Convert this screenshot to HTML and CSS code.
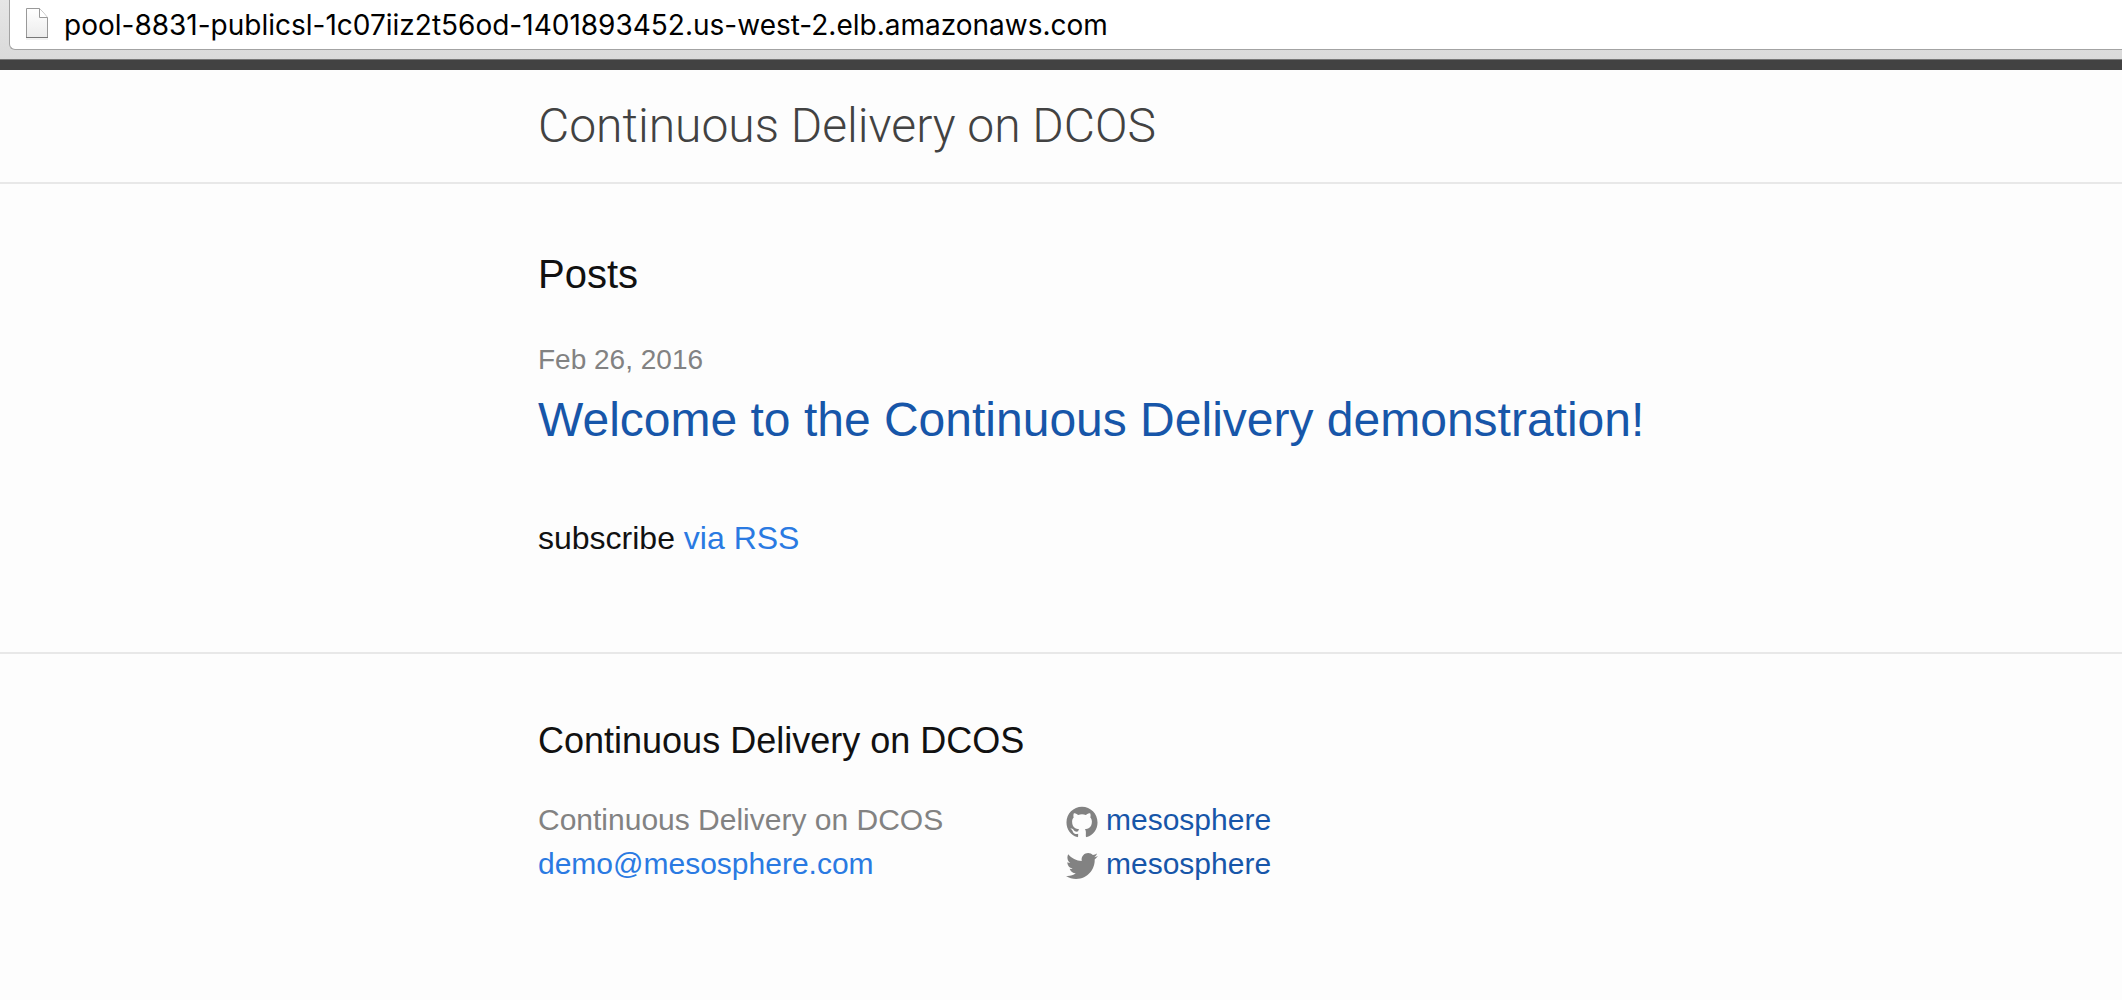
FILE: index.html
```html
<!DOCTYPE html>
<html lang="en">
<head>
<meta charset="utf-8">
<meta name="viewport" content="width=device-width, initial-scale=1">
<title>Continuous Delivery on DCOS</title>
<link rel="stylesheet" href="styles.css">
</head>
<body>
<div class="toolbar">
  <label class="address">
    <svg class="address-icon" viewBox="0 0 24 36" aria-hidden="true">
      <defs><linearGradient id="sheet" x1="0" y1="0" x2="0" y2="1"><stop offset="0" stop-color="#fff"/><stop offset="1" stop-color="#ececec"/></linearGradient></defs>
      <path d="M1.5 1.5H14.5L22.5 10.5V30.500H1.500Z" fill="url(#sheet)" stroke="#999"/>
      <path d="M14.500 1.500V10.500H22.500" fill="#fff" stroke="#999"/>
      <path d="M1 30.500H23" stroke="#777"/>
      <path d="M1 32H23" stroke="#e4e4e4"/>
    </svg>
    <input class="address-input" type="text" aria-label="Address" value="pool-8831-publicsl-1c07iiz2t56od-1401893452.us-west-2.elb.amazonaws.com">
  </label>
</div>
<header class="site-header">
  <div class="wrapper"><a class="site-title" href="#">Continuous Delivery on DCOS</a></div>
</header>
<main class="page-content">
  <div class="wrapper">
    <h1 class="page-heading">Posts</h1>
    <ul class="post-list">
      <li>
        <span class="post-meta">Feb 26, 2016</span>
        <h2 class="post-heading"><a class="post-link" href="#">Welcome to the Continuous Delivery demonstration!</a></h2>
      </li>
    </ul>
    <p class="rss">subscribe <a class="link" href="#">via RSS</a></p>
  </div>
</main>
<footer class="site-footer">
  <div class="wrapper">
    <h2 class="footer-heading">Continuous Delivery on DCOS</h2>
    <div class="footer-columns">
      <ul class="contact-list">
        <li>Continuous Delivery on DCOS</li>
        <li><a class="link" href="#">demo@mesosphere.com</a></li>
      </ul>
      <ul class="contact-list">
        <li><a class="social" href="#"><svg class="social-icon" viewBox="0 0 16 16" aria-hidden="true"><path d="M7.999,0.431c-4.285,0-7.76,3.474-7.76,7.761c0,3.428,2.223,6.337,5.307,7.363c0.388,0.071,0.53-0.168,0.53-0.374c0-0.184-0.007-0.672-0.01-1.32c-2.159,0.469-2.614-1.04-2.614-1.04c-0.353-0.896-0.862-1.135-0.862-1.135c-0.705-0.481,0.053-0.472,0.053-0.472c0.779,0.055,1.189,0.8,1.189,0.8c0.692,1.186,1.816,0.843,2.258,0.645c0.071-0.502,0.271-0.843,0.493-1.037C4.86,11.425,3.049,10.76,3.049,7.786c0-0.847,0.302-1.54,0.799-2.082C3.768,5.507,3.501,4.718,3.924,3.65c0,0,0.652-0.209,2.134,0.796C6.677,4.273,7.34,4.187,8,4.184c0.659,0.003,1.323,0.089,1.943,0.261c1.482-1.004,2.132-0.796,2.132-0.796c0.423,1.068,0.157,1.857,0.077,2.054c0.497,0.542,0.798,1.235,0.798,2.082c0,2.981-1.814,3.637-3.543,3.829c0.279,0.24,0.527,0.713,0.527,1.437c0,1.037-0.01,1.874-0.01,2.129c0,0.208,0.14,0.449,0.534,0.373c3.081-1.028,5.302-3.935,5.302-7.362C15.76,3.906,12.285,0.431,7.999,0.431z"/></svg>mesosphere</a></li>
        <li><a class="social" href="#"><svg class="social-icon" viewBox="0 0 16 16" aria-hidden="true"><path d="M15.969,3.058c-0.586,0.26-1.217,0.436-1.878,0.515c0.675-0.405,1.194-1.045,1.438-1.809c-0.632,0.375-1.332,0.647-2.076,0.793c-0.596-0.636-1.446-1.033-2.387-1.033c-1.806,0-3.27,1.464-3.27,3.27c0,0.256,0.029,0.506,0.085,0.745C5.163,5.404,2.753,4.102,1.14,2.124C0.859,2.607,0.698,3.168,0.698,3.767c0,1.134,0.577,2.135,1.455,2.722C1.616,6.472,1.112,6.325,0.671,6.08c0,0.014,0,0.027,0,0.041c0,1.584,1.127,2.906,2.623,3.206C3.02,9.402,2.731,9.442,2.433,9.442c-0.211,0-0.416-0.021-0.615-0.059c0.416,1.299,1.624,2.245,3.055,2.271c-1.119,0.877-2.529,1.4-4.061,1.4c-0.264,0-0.524-0.015-0.78-0.046c1.447,0.928,3.166,1.469,5.013,1.469c6.015,0,9.304-4.983,9.304-9.304c0-0.142-0.003-0.283-0.009-0.423C14.976,4.29,15.531,3.714,15.969,3.058z"/></svg>mesosphere</a></li>
      </ul>
    </div>
  </div>
</footer>
</body>
</html>
```
FILE: styles.css
```css
* { box-sizing: border-box; }

body {
  margin: 0;
  background: #fdfdfd;
  color: #111;
  font: 400 32px/48px "Helvetica Neue", "Liberation Sans", Arial, sans-serif;
}

h1, h2, p, ul { margin: 0; padding: 0; font-weight: 400; }
ul { list-style: none; }
a { text-decoration: none; }

/* Browser toolbar */
.toolbar {
  padding: 0 0 9px 9px;
  background: linear-gradient(#e6e6e6, #dadada);
  border-bottom: 1px solid #777;
}
.address {
  display: flex;
  align-items: center;
  gap: 15px;
  height: 50px;
  padding-left: 15px;
  background: #fff;
  border: 1px solid #a3a3a3;
  border-width: 0 0 1px 1px;
  border-bottom-left-radius: 6px;
}
.address-icon { width: 24px; height: 36px; flex: none; }
.address-input {
  flex: 1;
  min-width: 0;
  height: 48px;
  padding: 0;
  border: 0;
  outline: 0;
  background: none;
  color: #000;
  font: 400 28px/48px Inter, sans-serif;
}

.wrapper {
  max-width: 1600px;
  margin-left: min(478px, 23%);
  padding: 0 60px;
}

/* Site header */
.site-header {
  border-top: 10px solid #424242;
  border-bottom: 2px solid #e8e8e8;
}
.site-title {
  display: block;
  color: #424242;
  font: 300 48px/112px Roboto, sans-serif;
}

/* Posts */
.page-content { padding: 60px 0; }
.page-heading { margin-bottom: 32px; font-size: 40px; line-height: 60px; }
.post-list { margin-bottom: 58px; }
.post-meta { display: block; color: #828282; font-size: 28px; }
.post-heading { font-size: 48px; line-height: 72px; }
.post-link { color: #1756a9; }
.rss { margin-bottom: 30px; }
.link { color: #2a7ae2; }

/* Site footer */
.site-footer { padding: 60px 0; border-top: 2px solid #e8e8e8; }
.footer-heading { margin-bottom: 30px; font-size: 36px; line-height: 54px; }
.footer-columns {
  display: grid;
  grid-template-columns: 528px 1fr;
  color: #828282;
  font-size: 30px;
  line-height: 44px;
}
.social { display: flex; align-items: center; gap: 8px; color: #1756a9; }
.social-icon { width: 32px; height: 36px; padding-top: 4px; fill: #828282; }
```
